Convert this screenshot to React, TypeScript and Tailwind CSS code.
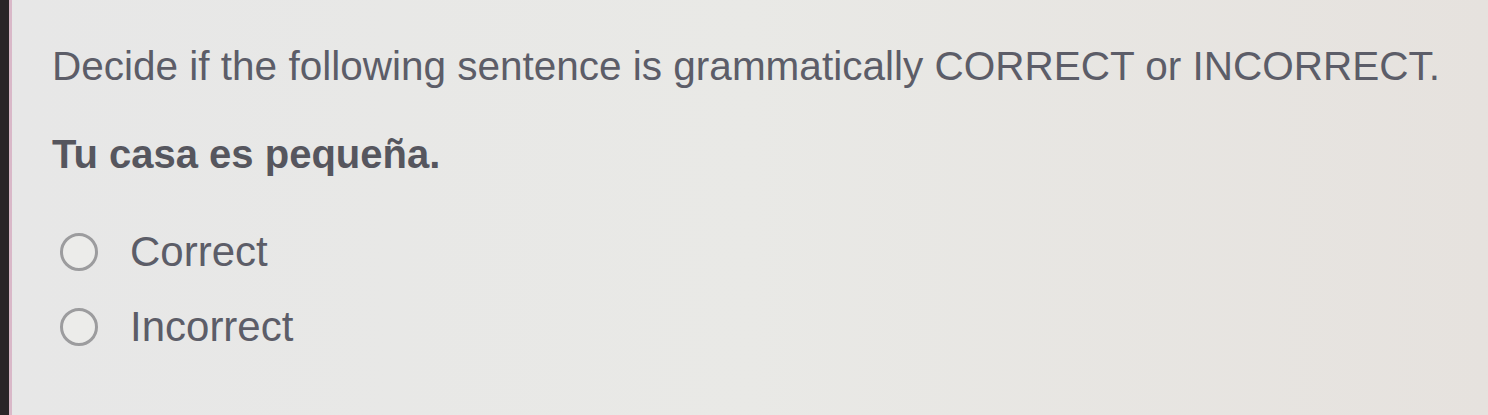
export default function App() {
  return (
    <div className="w-[1488px] h-[415px] flex bg-[#e8e8e6] overflow-hidden" style={{ fontFamily: '"Liberation Sans", Arial, sans-serif' }}>
      {/* Screen bezel edge */}
      <div className="w-[9px] h-full bg-[#2a2528]"></div>
      <div className="w-[3px] h-full bg-[#d9b8c8]"></div>

      <div className="flex-1 h-full bg-gradient-to-r from-[#e7e7e7] via-[#e9e9e6] to-[#e6e2de] pl-[40px] pt-[42px]">
        <p className="text-[40.5px] leading-[48px] text-[#5c5d68]">
          Decide if the following sentence is grammatically CORRECT or INCORRECT.
        </p>

        <p className="mt-[40px] text-[40px] leading-[48px] font-bold text-[#56565e]">
          Tu casa es pequeña.
        </p>

        <div className="mt-[53px] flex flex-col gap-[33px]">
          {["Correct", "Incorrect"].map((label) => (
            <label key={label} className="flex items-center gap-[32px] pl-[8px]">
              <span className="w-[38px] h-[38px] rounded-full border-[3px] border-[#9c9c9e] bg-[#ececea]"></span>
              <span className="text-[42px] leading-[42px] text-[#5c5d68]">{label}</span>
            </label>
          ))}
        </div>
      </div>
    </div>
  );
}
